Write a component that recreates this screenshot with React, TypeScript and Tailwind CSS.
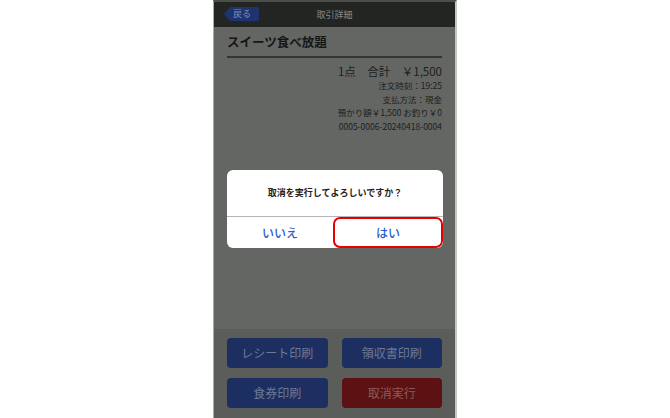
export default function App() {
  const font = { fontFamily: '"Noto Sans CJK JP", "Noto Sans", sans-serif' }

  return (
    <div className="w-[670px] h-[418px] bg-white overflow-hidden" style={font}>
      <div className="relative mx-auto flex h-[418px] w-[244px] flex-col border-l border-[#a9aba9] border-r-2 border-r-[#c4c6c4] border-t-2 border-t-[#4c4e4c] bg-[#646664]">
        {/* Header */}
        <div className="relative flex h-[25px] items-center justify-center bg-[#232523]">
          <div className="absolute left-[10px] top-[5px] flex h-[14px] items-center">
            <div className="h-0 w-0 border-y-[7px] border-r-[6px] border-y-transparent border-r-[#1d3470]" />
            <div className="flex h-[14px] items-center rounded-r-[2px] bg-[#1d3470] pl-[3px] pr-[8px] text-[9px] text-[#7f8fb9]">
              戻る
            </div>
          </div>
          <span className="text-[9px] text-[#878987]">取引詳細</span>
        </div>

        {/* Detail */}
        <div className="flex flex-1 flex-col px-[13px]">
          <div className="pt-[7px] pb-[6px] text-[12.5px] font-bold leading-[16px] text-[#151715]">
            スイーツ食べ放題
          </div>
          <div className="h-[2px] bg-[#343634]" />
          <div className="mt-[5px] flex flex-col items-end text-[#1c1e1c]">
            <div className="text-[11.5px] leading-[16px]">1点　合計　￥1,500</div>
            <div className="text-[8.5px] leading-[13.5px]">注文時刻：19:25</div>
            <div className="text-[8.5px] leading-[13.5px]">支払方法：現金</div>
            <div className="text-[8.5px] leading-[13.5px]">預かり額￥1,500 お釣り￥0</div>
            <div className="text-[8.5px] leading-[13.5px]">0005-0006-20240418-0004</div>
          </div>
        </div>

        {/* Bottom buttons */}
        <div className="grid h-[89px] grid-cols-2 gap-x-[14px] gap-y-[10px] bg-[#5b5d5b] px-[13px] pt-[9px] pb-[10px]">
          <div className="flex items-center justify-center rounded-[4px] bg-[#1c2f60] text-[12px] text-[#6d7999]">
            レシート印刷
          </div>
          <div className="flex items-center justify-center rounded-[4px] bg-[#1c2f60] text-[12px] text-[#6d7999]">
            領収書印刷
          </div>
          <div className="flex items-center justify-center rounded-[4px] bg-[#1c2f60] text-[12px] text-[#6d7999]">
            食券印刷
          </div>
          <div className="flex items-center justify-center rounded-[4px] bg-[#5c1212] text-[12px] text-[#8e5b5b]">
            取消実行
          </div>
        </div>

        {/* Confirm dialog */}
        <div className="absolute left-[13px] top-[168px] flex h-[78px] w-[216px] flex-col overflow-hidden rounded-[6px] bg-white">
          <div className="flex h-[46px] items-center justify-center text-[9px] font-bold text-[#222]">
            取消を実行してよろしいですか？
          </div>
          <div className="flex flex-1 border-t border-[#b5b5b5]">
            <div className="flex flex-1 items-center justify-center text-[12px] font-medium text-[#2a5fd0]">
              いいえ
            </div>
            <div className="flex flex-1 items-center justify-center rounded-[7px] border-2 border-[#e60000] text-[12px] font-medium text-[#2a5fd0]">
              はい
            </div>
          </div>
        </div>
      </div>
    </div>
  )
}
